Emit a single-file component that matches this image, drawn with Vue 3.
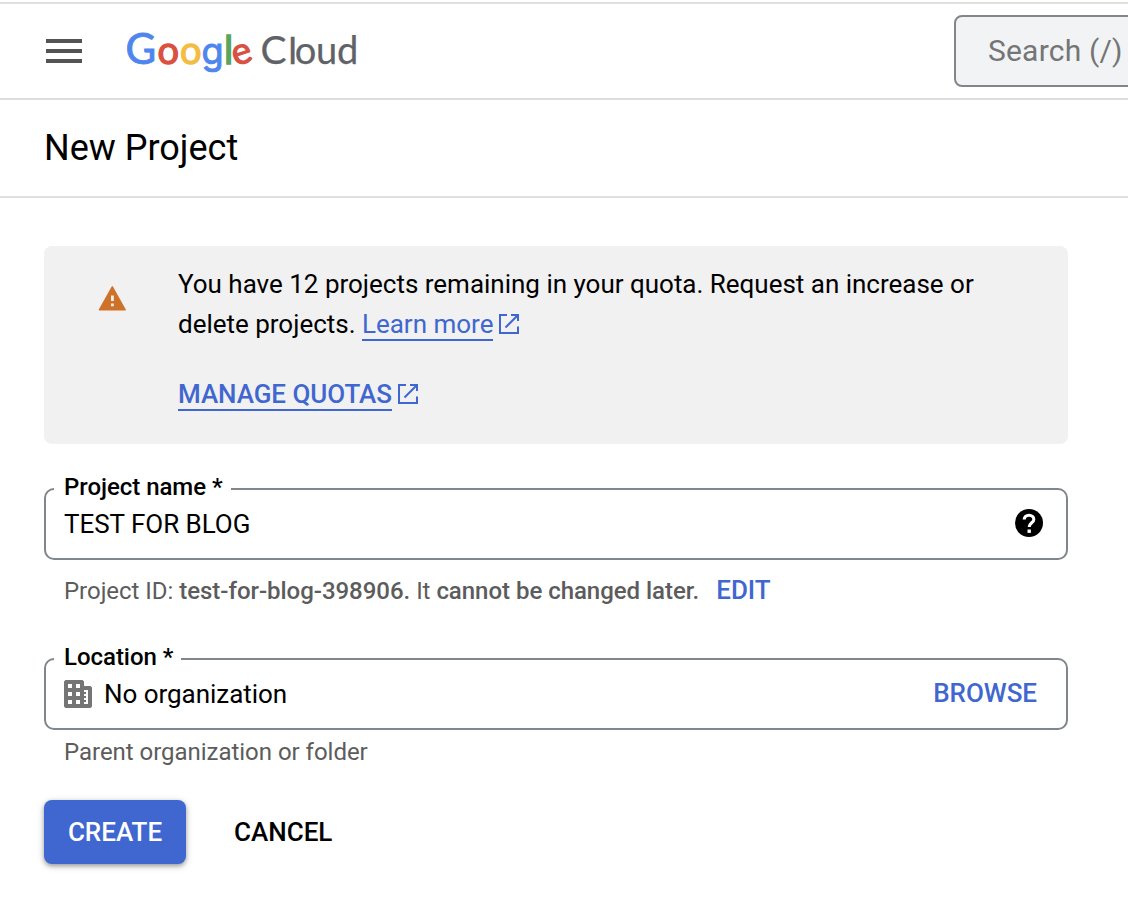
<script setup>
const logo = [
  { ch: 'G', x: 125.5, fill: '#4f86ee', size: 42, font: 'Lato', stroke: 0.9 },
  { ch: 'o', x: 157.5, fill: '#d95140', size: 38, font: 'Lato', stroke: 1.3 },
  { ch: 'o', x: 180, fill: '#f2bd42', size: 38, font: 'Lato', stroke: 1.3 },
  { ch: 'g', x: 201.5, fill: '#4f86ee', size: 36, font: 'Inter', stroke: 1 },
  { ch: 'l', x: 224, fill: '#58a55c', size: 39, font: 'Lato', stroke: 1.4 },
  { ch: 'e', x: 232, fill: '#d95140', size: 37, font: 'Lato', stroke: 1.2, tilt: -18 },
  { ch: 'C', x: 260.5, fill: '#5f6368', size: 39, font: 'Lato', stroke: 0.25 },
  { ch: 'l', x: 288.3, fill: '#5f6368', size: 37, font: 'Lato', stroke: 0.4 },
  { ch: 'o', x: 294.8, fill: '#5f6368', size: 38, font: 'Lato', stroke: 0.25 },
  { ch: 'u', x: 316, fill: '#5f6368', size: 38, font: 'Lato', stroke: 0.25 },
  { ch: 'd', x: 337, fill: '#5f6368', size: 38, font: 'Lato', stroke: 0.25 },
]
</script>

<template>
  <div class="page">
    <header class="topbar">
      <button class="menu" aria-label="Main menu"><i></i><i></i><i></i></button>
      <svg class="logo" viewBox="116 8 256 84" width="256" height="84" role="img" aria-label="Google Cloud">
        <text
          v-for="(l, i) in logo"
          :key="i"
          :x="l.x"
          y="63.5"
          :fill="l.fill"
          :stroke="l.fill"
          :stroke-width="l.stroke"
          :font-size="l.size"
          :font-family="l.font"
          :transform="l.tilt ? `rotate(${l.tilt} 242 54)` : null"
        >{{ l.ch }}</text>
      </svg>
      <div class="search">Search (/)</div>
    </header>

    <div class="titlebar"><h1>New Project</h1></div>

    <main>
      <section class="notice">
        <svg class="warn" viewBox="0 0 28 25" width="28" height="25">
          <path d="M14.3 .8 27.2 23.8H1.400z" fill="#cf7229" stroke="#cf7229" stroke-width="1.4" stroke-linejoin="round" />
          <path d="M13 9.500h2.800v5.600h-2.800zM13 17.500h2.800v2.800h-2.800z" fill="#f1f1f1" />
        </svg>
        <div class="notice-body">
          <p>
            You have 12 projects remaining in your quota. Request an increase or<br />
            delete projects. <a class="learn">Learn more</a><svg class="ext" viewBox="0 0 20 20" width="20" height="20"><path d="M8 1H1v18h18v-6.5M12 1h7v6M19 1 6.5 13.5" /></svg>
          </p>
          <p class="manage">
            <a>MANAGE QUOTAS</a><svg class="ext" viewBox="0 0 20 20" width="20" height="20"><path d="M8 1H1v18h18v-6.5M12 1h7v6M19 1 6.5 13.5" /></svg>
          </p>
        </div>
      </section>

      <fieldset class="field">
        <legend>Project name *</legend>
        <div class="row">
          <span class="value">TEST FOR BLOG</span>
          <svg class="help" viewBox="0 0 28 28" width="28" height="28">
            <circle cx="14" cy="14" r="14" />
            <path d="M9.2 10.6C9.2 7.9 11.2 6.2 14 6.2c2.8 0 4.8 1.700 4.800 4.200 0 3.300-4.600 3.500-4.600 7.600" fill="none" stroke="#fff" stroke-width="3.1" />
            <path d="M12.5 20.500h3.400v3.400h-3.400z" fill="#fff" />
          </svg>
        </div>
      </fieldset>
      <p class="hint id-hint">
        Project ID: <b class="pid">test-for-blog-398906.</b> It <b>cannot be changed later.</b><a class="edit">EDIT</a>
      </p>

      <fieldset class="field location">
        <legend>Location *</legend>
        <div class="row">
          <svg class="building" viewBox="0 0 28 28" width="28" height="28">
            <path
              fill="#757575"
              fill-rule="evenodd"
              d="M1.5 0h17L20 1.5V6h6.5L28 7.500v19L26.500 28h-25L0 26.500v-25zM4 4v4h4V4zM12 4v4h4V4zM4 12v4h4v-4zM12 12v4h4v-4zM4 20v4h4v-4zM12 20v4h4v-4zM20 10v2h2v2h-2v2h2v2h-2v2h2v2h-2v2h4V10z"
            />
          </svg>
          <span class="value org">No organization</span>
          <a class="browse">BROWSE</a>
        </div>
      </fieldset>
      <p class="hint parent">Parent organization or folder</p>

      <div class="actions">
        <button class="create">CREATE</button>
        <button class="cancel">CANCEL</button>
      </div>
    </main>
  </div>
</template>

<style>
body { margin: 0; background: #fff; overflow: hidden; }
</style>

<style scoped>
.page {
  box-sizing: border-box;
  width: 1128px;
  height: 904px;
  padding-top: 2px;
  overflow: hidden;
  background: #fff;
  color: #000;
  font-family: Roboto, "Liberation Sans", sans-serif;
  font-size: 26px;
}
p, h1 { margin: 0; font-weight: 400; }
a { color: #4067d0; }
button { border: 0; padding: 0; background: none; font: inherit; font-weight: 500; }
.topbar {
  box-sizing: border-box;
  display: flex;
  height: 98px;
  padding-left: 46px;
  border-top: 2px solid #e0e0e0;
  border-bottom: 2px solid #dadce0;
}
.menu { flex: none; display: flex; flex-direction: column; gap: 6px; width: 36px; margin-top: 35px; }
.menu i { flex: none; width: 36px; height: 4px; background: #545454; }
.logo { margin: 4px 0 0 34px; flex: none; overflow: visible; }
.search {
  box-sizing: border-box;
  flex: none;
  width: 240px;
  height: 72px;
  margin: 11px 0 0 582px;
  padding-left: 32px;
  border: 2px solid #80868b;
  border-radius: 8px;
  background: #f1f3f4;
  color: #757575;
  font-size: 30px;
  line-height: 68px;
  letter-spacing: 0.2px;
  white-space: nowrap;
}
.titlebar { height: 96px; padding-left: 44px; border-bottom: 2px solid #e0e0e0; }
h1 { font-size: 36px; line-height: 96px; }
main { padding: 48px 60px 0 44px; }
.notice {
  box-sizing: border-box;
  display: flex;
  height: 198px;
  padding: 18px 0 0 54px;
  border-radius: 8px;
  background: #f1f1f1;
}
.warn { margin: 22px 52px 0 0; flex: none; }
.notice-body { white-space: nowrap; line-height: 40px; letter-spacing: -0.01px; }
.notice-body a { display: inline-block; line-height: 30px; height: 30px; border-bottom: 2px solid #4067d0; }
.ext { margin-left: 6px; vertical-align: -1px; fill: none; stroke: #4067d0; stroke-width: 2; }
.manage { margin-top: 30px; font-weight: 500; letter-spacing: -0.06px; }
.field {
  box-sizing: border-box;
  height: 86px;
  margin: 30px 0 0;
  padding: 0 22px 0 8px;
  border: 2px solid #80868b;
  border-radius: 10px;
  letter-spacing: -0.04px;
}
.field legend { height: 30px; padding: 0 8px 0 10px; font-size: 24px; font-weight: 500; line-height: 26px; }
.row { display: flex; align-items: center; height: 40px; padding-left: 10px; }
.help { margin: 0 1px 2px auto; }
.org { margin-left: 12px; }
.browse { margin: 0 0 2px auto; padding-right: 7px; font-weight: 500; }
.hint { padding-left: 20px; color: #5c5c5c; font-size: 24px; line-height: 32px; letter-spacing: -0.03px; white-space: nowrap; }
.hint b { font-weight: 500; }
.id-hint { margin-top: 14px; }
.location { margin-top: 37px; }
.edit { margin-left: 17px; font-size: 26px; font-weight: 500; }
.parent { margin-top: 6px; }
.actions { display: flex; gap: 48px; margin-top: 32px; }
.create {
  width: 142px;
  height: 64px;
  border-radius: 8px;
  background: #4067d0;
  color: #fff;
  box-shadow: 0 2px 4px rgba(0, 0, 0, 0.3), 0 2px 8px rgba(0, 0, 0, 0.16);
}
</style>
